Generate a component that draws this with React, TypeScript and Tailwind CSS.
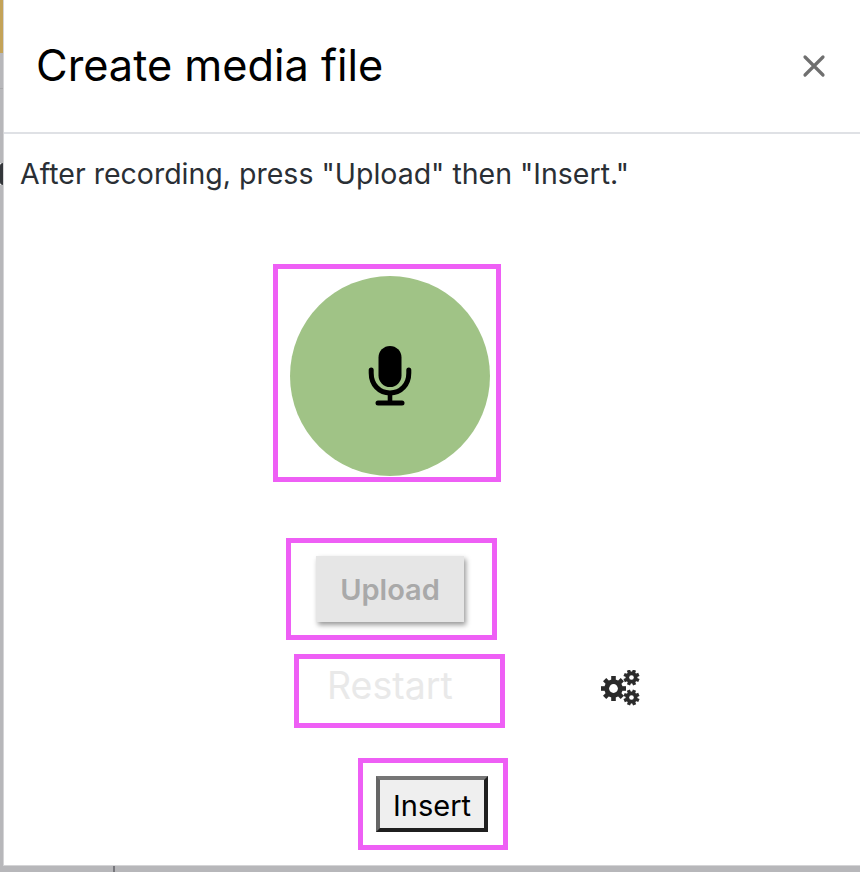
import React from 'react';

const Mic = () => (
    <svg width="44" height="60" viewBox="0 0 44 60" fill="none">
        <rect x="10.5" y="0" width="23" height="41" rx="11.5" fill="#000" />
        <path d="M3.2 24 V27 C3.2 38.5 11 47 22 47 C33 47 40.8 38.5 40.8 27 V24" stroke="#000" strokeWidth="5" strokeLinecap="round" />
        <path d="M22 47 V56" stroke="#000" strokeWidth="4.6" />
        <path d="M10 57 H34" stroke="#000" strokeWidth="5" strokeLinecap="round" />
    </svg>
);

const Close = () => (
    <svg width="24" height="24" viewBox="0 0 24 24" fill="none">
        <path d="M3 3 L21 21 M21 3 L3 21" stroke="#6f6f6f" strokeWidth="3.2" strokeLinecap="round" />
    </svg>
);

const Gear = ({ cx, cy, r, hole, tw, start }: { cx: number; cy: number; r: number; hole: number; tw: number; start: number }) => (
    <g>
        <circle cx={cx} cy={cy} r={r * 0.74} fill="#2b2b2b" />
        {[0, 45, 90, 135].map((a) => (
            <rect
                key={a}
                x={cx - tw / 2}
                y={cy - r}
                width={tw}
                height={r * 2}
                fill="#2b2b2b"
                transform={`rotate(${start + a} ${cx} ${cy})`}
            />
        ))}
        <circle cx={cx} cy={cy} r={hole} fill="#fff" />
    </g>
);

const Cogs = () => (
    <svg width="40" height="36" viewBox="0 0 40 36" className="ml-[96px] mt-[8px]">
        <Gear cx={12.5} cy={18.5} r={12.5} hole={4.4} tw={4.6} start={0} />
        <Gear cx={30.5} cy={7.5} r={8} hole={2.3} tw={3.4} start={22} />
        <Gear cx={30.5} cy={27.5} r={8} hole={2.3} tw={3.4} start={22} />
    </svg>
);

export default function App() {
    return (
        <div className="flex h-[872px] w-[860px] overflow-hidden bg-[#b7b7ba] font-['Inter',sans-serif]">
            <div className="flex w-[3px] shrink-0 flex-col overflow-hidden">
                <div className="h-[53px] bg-[#c4a358]" />
                <div className="h-[35px]" />
                <div className="h-px bg-[#a8a8aa]" />
                <div className="h-[74px]" />
                <div className="flex h-[22px] w-[3px] justify-end bg-white">
                    <div className="w-full rounded-l-sm bg-[#33363a]" />
                </div>
            </div>
            <div className="flex w-[857px] flex-col">
                <div className="flex h-[866px] flex-col border-b border-l border-[#d4d4d6] bg-white">
                    <div className="flex h-[134px] items-center justify-between border-b-2 border-[#dfe1e5] pl-[32px] pr-[34px]">
                        <h1 className="text-[43.3px] font-normal leading-none text-black">Create media file</h1>
                        <Close />
                    </div>
                    <div className="flex flex-col">
                        <p className="ml-[16px] mt-[22px] text-[28.5px] leading-[36px] text-[#2a2f35]">
                            After recording, press "Upload" then "Insert."
                        </p>
                        <div className="ml-[269px] mt-[72px] flex h-[218px] w-[228px] items-start justify-center border-[5px] border-[#ee5ff5] pl-[6px] pt-[7px]">
                            <div className="flex h-[200px] w-[200px] items-center justify-center rounded-full bg-[#a0c386]">
                                <Mic />
                            </div>
                        </div>
                        <div className="ml-[282px] mt-[56px] flex h-[102px] w-[211px] items-start justify-start border-[5px] border-[#ee5ff5] pl-[25px] pt-[13px]">
                            <div className="flex h-[66px] w-[148px] items-center justify-center bg-[#e6e6e6] pt-[2px] text-[29px] font-semibold text-[#a9a9a9] shadow-[2px_3px_5px_rgba(0,0,0,0.4)]">
                                Upload
                            </div>
                        </div>
                        <div className="flex items-center">
                            <div className="ml-[290px] mt-[14px] flex h-[74px] w-[211px] items-center justify-start border-[5px] border-[#ee5ff5] pb-[10px] pl-[28px] text-[37.5px] leading-none text-[#e9e9e9]">
                                Restart
                            </div>
                            <Cogs />
                        </div>
                        <div className="ml-[354px] mt-[30px] flex h-[92px] w-[150px] items-start justify-start border-[5px] border-[#ee5ff5] pl-[13px] pt-[13px]">
                            <button className="h-[56px] w-[112px] border-4 border-t-[#767676] border-r-[#1f1f1f] border-b-[#1f1f1f] border-l-[#666666] bg-[#efefef] pt-[3px] text-[29px] text-black">
                                Insert
                            </button>
                        </div>
                    </div>
                </div>
                <div className="ml-[110px] h-[6px] w-[2px] bg-[#77777c]" />
            </div>
        </div>
    );
}
